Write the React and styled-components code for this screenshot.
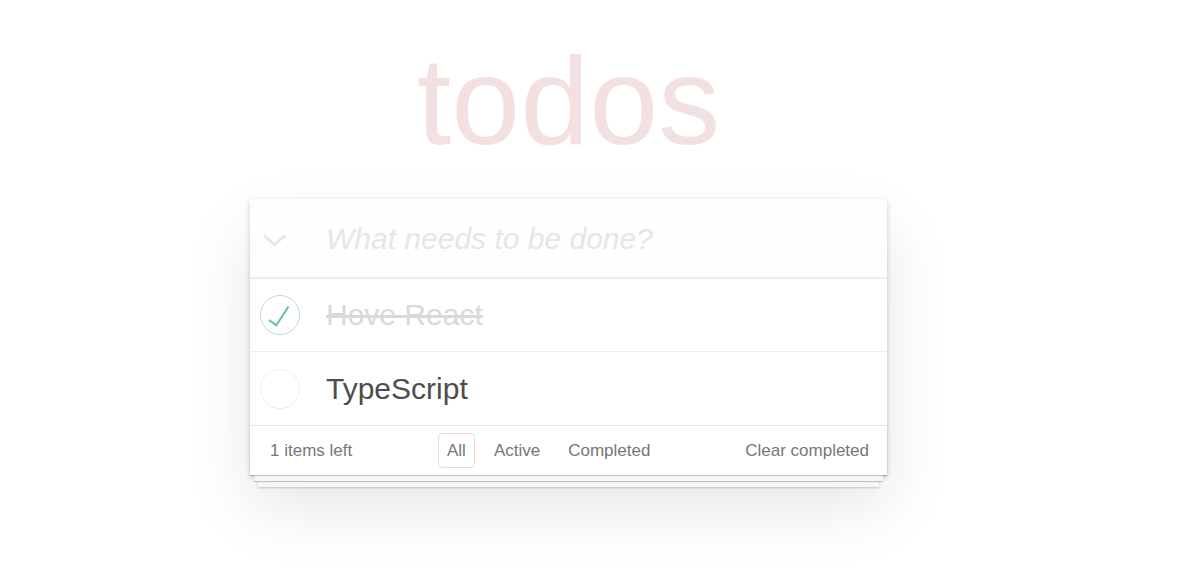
import styled, { createGlobalStyle } from 'styled-components';

const GlobalStyle = createGlobalStyle`
    html, body {
        margin: 0;
        padding: 0;
        background: #fff;
    }
    body {
        font-family: "Liberation Sans", Arial, sans-serif;
        color: #4d4d4d;
        -webkit-font-smoothing: antialiased;
    }
`

const todos = [
    { id: 1, title: 'Hove React', completed: true },
    { id: 2, title: 'TypeScript', completed: false },
];

const filters = ['All', 'Active', 'Completed'];

function Chevron () {
    return (
        <svg width="26" height="14" viewBox="0 0 26 14">
            <polyline points="2,2.5 12.5,11.5 23,2.5" fill="none" stroke="#e6e6e6" strokeWidth="2.8" />
        </svg>
    )
}

function Check ({ done }) {
    return (
        <svg width="40" height="40" viewBox="0 0 40 40">
            <circle cx="20" cy="20" r="19.5" fill="none" stroke={done ? '#bddad5' : '#ededed'} strokeWidth="1" />
            { done ? <polyline points="9,25 16.3,30.3 28.5,11.5" fill="none" stroke="#5dc2af" strokeWidth="2" /> : null }
        </svg>
    )
}

export default function App () {
    const left = todos.filter(t => !t.completed).length;

    return (
        <Page>
            <GlobalStyle />
            <Column>
                <Title>todos</Title>
                <TodoApp>
                    <Header>
                        <ToggleAll><Chevron /></ToggleAll>
                        <NewTodo placeholder="What needs to be done?" />
                    </Header>
                    <List>
                        { todos.map(todo => (
                            <Item key={todo.id}>
                                <Toggle><Check done={todo.completed} /></Toggle>
                                <Label $done={todo.completed}>{todo.title}</Label>
                            </Item>
                        ))}
                    </List>
                    <Footer>
                        <Count>{left} items left</Count>
                        <Filters>
                            { filters.map((f, i) => (
                                <Filter key={f} $selected={i === 0}>{f}</Filter>
                            ))}
                        </Filters>
                        <Clear>Clear completed</Clear>
                    </Footer>
                </TodoApp>
            </Column>
        </Page>
    )
}

const Page = styled.div`
    min-height: 574px;
    padding: 0 0 0 250px;
    box-sizing: border-box;
    overflow: hidden;
`

const Column = styled.div`
    width: 637px;
    display: flex;
    flex-direction: column;
`

const Title = styled.h1`
    margin: 0;
    padding-top: 39px;
    height: 199px;
    box-sizing: border-box;
    text-align: center;
    font-size: 124px;
    line-height: 124px;
    font-weight: 400;
    color: rgba(175, 47, 47, 0.15);
    text-rendering: optimizeLegibility;
`

const TodoApp = styled.section`
    background: #fff;
    position: relative;
    box-shadow: 0 2px 5px rgba(0, 0, 0, 0.2), 0 31px 62px rgba(0, 0, 0, 0.1);
`

const Header = styled.header`
    height: 79px;
    display: flex;
    align-items: center;
    background: rgba(0, 0, 0, 0.003);
    box-shadow: inset 0 -2px 1px rgba(0, 0, 0, 0.03);
`

const ToggleAll = styled.div`
    width: 76px;
    padding-left: 12px;
    padding-top: 2px;
    box-sizing: border-box;
    display: flex;
    align-items: center;
`

const NewTodo = styled.input`
    flex: 1;
    border: none;
    outline: none;
    background: transparent;
    font-family: inherit;
    font-size: 30px;
    line-height: 1.4;
    color: #4d4d4d;
    padding: 0;

    &::placeholder {
        font-style: italic;
        color: #e6e6e6;
    }
`

const List = styled.ul`
    margin: 0;
    padding: 0;
    list-style: none;
    border-top: 1px solid #e6e6e6;
`

const Item = styled.li`
    height: 72px;
    display: flex;
    align-items: center;
    border-bottom: 1px solid #ededed;

    &:last-child {
        border-bottom: none;
        height: 73px;
    }
`

const Toggle = styled.div`
    width: 40px;
    height: 40px;
    margin: 0 26px 0 10px;
    display: flex;
`

const Label = styled.label`
    font-size: 30px;
    line-height: 1.2;
    color: ${p => p.$done ? '#d9d9d9' : '#4d4d4d'};
    text-decoration: ${p => p.$done ? 'line-through' : 'none'};
`

const Footer = styled.footer`
    height: 50px;
    box-sizing: border-box;
    padding: 0 18px 0 20px;
    display: flex;
    align-items: center;
    border-top: 1px solid #e6e6e6;
    color: #777;
    font-size: 17px;
    box-shadow:
        0 1px 1px rgba(0, 0, 0, 0.2),
        0 10px 0 -4px #f6f6f6,
        0 11px 1px -4px rgba(0, 0, 0, 0.2),
        0 20px 0 -8px #f6f6f6,
        0 21px 2px -8px rgba(0, 0, 0, 0.2);
`

const Count = styled.span`
    flex: 0 0 168px;
`

const Filters = styled.ul`
    margin: 0;
    padding: 0;
    list-style: none;
    display: flex;
    gap: 10px;
`

const Filter = styled.li`
    padding: 0 8px;
    height: 35px;
    box-sizing: border-box;
    display: flex;
    align-items: center;
    border: 1px solid ${p => p.$selected ? 'rgba(175, 47, 47, 0.2)' : 'transparent'};
    border-radius: 4px;
    cursor: pointer;
`

const Clear = styled.button`
    margin-left: auto;
    border: none;
    background: none;
    padding: 0;
    font-family: inherit;
    font-size: 17px;
    color: #777;
    cursor: pointer;
`
